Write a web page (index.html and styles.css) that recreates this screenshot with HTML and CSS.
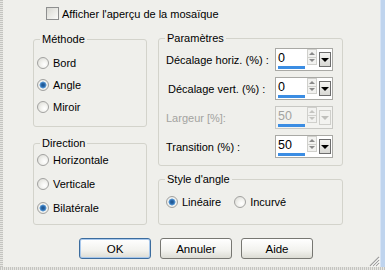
FILE: index.html
```html
<!DOCTYPE html>
<html lang="fr">
<head>
<meta charset="utf-8">
<title>Mosaïque</title>
<link rel="stylesheet" href="styles.css">
</head>
<body>
<div class="window">
  <div class="frame">
    <div class="edge-left"></div>
    <div class="content">
      <div class="check-row"><span class="checkbox"></span><span>Afficher l'aperçu de la mosaïque</span></div>
      <div class="main">
        <div class="col col-left">
          <fieldset class="group g-methode">
            <legend>Méthode</legend>
            <div class="radio-list list-methode">
              <div class="radio-row"><span class="radio"></span>Bord</div>
              <div class="radio-row"><span class="radio on"></span>Angle</div>
              <div class="radio-row"><span class="radio"></span>Miroir</div>
            </div>
          </fieldset>
          <fieldset class="group g-direction">
            <legend>Direction</legend>
            <div class="radio-list list-direction">
              <div class="radio-row"><span class="radio"></span>Horizontale</div>
              <div class="radio-row"><span class="radio"></span>Verticale</div>
              <div class="radio-row"><span class="radio on"></span>Bilatérale</div>
            </div>
          </fieldset>
        </div>
        <div class="col col-right">
          <fieldset class="group g-params">
            <legend>Paramètres</legend>
            <div class="param-list">
              <div class="param-row">
                <span class="plabel">Décalage horiz. (%) :</span>
                <div class="spin">
                  <div class="field"><span class="val">0</span><span class="bar"></span></div>
                  <div class="updown"><span class="up"></span><span class="dn"></span></div>
                  <div class="drop"><span class="tri"></span></div>
                </div>
              </div>
              <div class="param-row">
                <span class="plabel indent">Décalage vert. (%) :</span>
                <div class="spin">
                  <div class="field"><span class="val">0</span><span class="bar"></span></div>
                  <div class="updown"><span class="up"></span><span class="dn"></span></div>
                  <div class="drop"><span class="tri"></span></div>
                </div>
              </div>
              <div class="param-row">
                <span class="plabel disabled">Largeur [%]:</span>
                <div class="spin off">
                  <div class="field"><span class="val">50</span><span class="bar"></span></div>
                  <div class="updown"><span class="up"></span><span class="dn"></span></div>
                  <div class="drop"><span class="tri"></span></div>
                </div>
              </div>
              <div class="param-row">
                <span class="plabel">Transition (%) :</span>
                <div class="spin">
                  <div class="field"><span class="val">50</span><span class="bar"></span></div>
                  <div class="updown"><span class="up"></span><span class="dn"></span></div>
                  <div class="drop"><span class="tri"></span></div>
                </div>
              </div>
            </div>
          </fieldset>
          <fieldset class="group g-style">
            <legend>Style d'angle</legend>
            <div class="style-row">
              <div class="radio-row"><span class="radio on"></span>Linéaire</div>
              <div class="radio-row"><span class="radio"></span>Incurvé</div>
            </div>
          </fieldset>
        </div>
      </div>
      <div class="buttons">
        <div class="btn default">OK</div>
        <div class="btn">Annuler</div>
        <div class="btn">Aide</div>
      </div>
      <svg class="grip" width="12" height="12" viewBox="0 0 12 12">
        <path d="M11 2 L2 11 M11 5 L5 11 M11 8 L8 11" stroke="#a0a0a0" stroke-width="1.2" fill="none"/>
        <path d="M11.8 2.8 L2.8 11.8 M11.8 5.8 L5.8 11.8 M11.8 8.8 L8.8 11.8" stroke="#ffffff" stroke-width="1" fill="none"/>
      </svg>
    </div>
    <div class="edge-right"></div>
  </div>
  <div class="edge-bottom"></div>
</div>
</body>
</html>
```

FILE: styles.css
```css
* { box-sizing: border-box; }
html, body { margin: 0; padding: 0; }
body {
  width: 385px;
  height: 270px;
  overflow: hidden;
  background: #efefeb;
  font-family: "Liberation Sans", Arial, sans-serif;
  font-size: 11px;
  color: #000;
}
.window {
  width: 385px;
  height: 270px;
  display: flex;
  flex-direction: column;
}
.frame {
  flex: 1;
  display: flex;
}
.edge-left {
  width: 3px;
  background: repeating-linear-gradient(#c4c4c0 0 1px, #e6e6e2 1px 2px);
}
.edge-right {
  width: 5px;
  background: #bfd4ee;
  border-left: 1px solid #d6e3f4;
}
.edge-bottom {
  height: 3px;
  background: repeating-linear-gradient(90deg, #c4c4c0 0 1px, #e6e6e2 1px 2px);
}
.content {
  flex: 1;
  position: relative;
  display: flex;
  flex-direction: column;
}
.check-row {
  margin-top: 7px;
  padding-left: 43px;
  height: 13px;
  display: flex;
  align-items: center;
  gap: 3px;
}
.checkbox {
  width: 13px;
  height: 13px;
  border: 1px solid #8e8f8f;
  background: linear-gradient(135deg, #d8d8d2, #fbfbf9);
}
.main {
  margin-top: 11px;
  padding-left: 30px;
  display: flex;
  gap: 11px;
  align-items: flex-start;
}
.col {
  display: flex;
  flex-direction: column;
}
.col-left { width: 114px; padding-top: 1px; gap: 9px; }
.col-right { width: 185px; gap: 6px; }
.group {
  margin: 0;
  padding: 0;
  border: 1px solid #d3d3cb;
  border-radius: 3px;
  min-width: 0;
}
.group legend {
  margin-left: 6px;
  padding: 0 2px;
  height: 14px;
  line-height: 14px;
}
.radio-list {
  display: flex;
  flex-direction: column;
  padding-left: 3px;
}
.list-methode { padding-top: 7px; padding-bottom: 9px; gap: 2px; }
.list-direction { padding-top: 0; padding-bottom: 6px; gap: 4px; }
.radio-row {
  height: 20px;
  display: flex;
  align-items: center;
  gap: 4px;
}
.radio {
  width: 12px;
  height: 12px;
  border-radius: 50%;
  border: 1px solid #a2a2a0;
  background: radial-gradient(circle at 65% 65%, #ffffff 0, #f4f4f1 35%, #d8d8d2 100%);
}
.radio.on {
  background:
    radial-gradient(circle at 50% 50%, #1b4f86 0, #2b6cb0 2px, #6aa6dc 3.2px, #f4f4f1 3.8px, #dadad4 100%);
}
.param-list {
  display: flex;
  flex-direction: column;
  gap: 6px;
  padding: 3px 9px 7px 7px;
}
.param-row {
  height: 23px;
  display: flex;
  align-items: center;
  justify-content: space-between;
}
.plabel.indent { margin-left: 2px; }
.plabel.disabled { color: #a3a3a0; }
.spin {
  width: 58px;
  height: 23px;
  border: 1px solid #a9a9a5;
  background: #fff;
  display: flex;
}
.field {
  width: 31px;
  display: flex;
  flex-direction: column;
  padding: 2px 0 1px 2px;
}
.val {
  flex: 1;
  font-size: 12.5px;
  line-height: 15px;
}
.bar {
  width: 27px;
  height: 3px;
  background: #3b8de3;
}
.updown {
  width: 10px;
  height: 16px;
  display: flex;
  flex-direction: column;
  border: 1px solid #d0d0cc;
  background: #f2f2f0;
}
.updown span {
  flex: 1;
  display: flex;
  align-items: center;
  justify-content: center;
}
.updown .up { border-bottom: 1px solid #d0d0cc; }
.updown .up::after {
  content: "";
  border-left: 3px solid transparent;
  border-right: 3px solid transparent;
  border-bottom: 3px solid #8a8a8a;
}
.updown .dn::after {
  content: "";
  border-left: 3px solid transparent;
  border-right: 3px solid transparent;
  border-top: 3px solid #8a8a8a;
}
.drop {
  width: 12px;
  height: 15px;
  margin: 3px 0 0 2px;
  border: 1px solid #6e6e6e;
  background: linear-gradient(#f4f4f2, #d8d8d4);
  display: flex;
  align-items: center;
  justify-content: center;
}
.drop .tri {
  border-left: 4px solid transparent;
  border-right: 4px solid transparent;
  border-top: 4px solid #000;
}
.spin.off { background: #f3f3f0; border-color: #c8c8c4; }
.spin.off .val { color: #a3a3a0; }
.spin.off .updown .up::after { border-bottom-color: #c4c4c0; }
.spin.off .updown .dn::after { border-top-color: #c4c4c0; }
.spin.off .drop { border-color: #cfcfcb; background: #f3f3f0; }
.spin.off .drop .tri { border-top-color: #c0c0bc; }
.style-row {
  display: flex;
  gap: 13px;
  padding: 6px 0 12px 7px;
}
.buttons {
  margin-top: 13px;
  padding-left: 76px;
  display: flex;
  gap: 9px;
}
.btn {
  width: 72px;
  height: 21px;
  border: 1px solid #777772;
  border-radius: 3px;
  background: linear-gradient(#ffffff, #f2f2ee 60%, #dcdcd4);
  display: flex;
  align-items: center;
  justify-content: center;
  font-size: 11.5px;
}
.btn.default {
  border-color: #3b6c9e;
  box-shadow: inset 0 0 0 1px #a8c8ec;
}
.grip {
  position: absolute;
  right: 0;
  bottom: 0;
}
```
